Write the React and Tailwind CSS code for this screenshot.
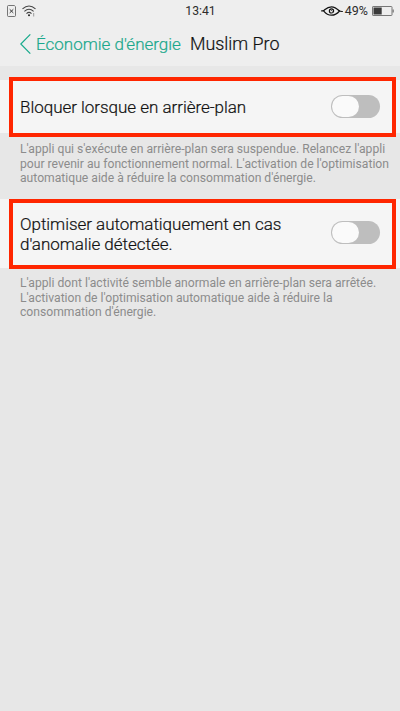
function CloseFileIcon() {
  return (
    <svg className="h-[12px] w-[9px]" viewBox="0 0 9 12" fill="none" stroke="#555">
      <path d="M1.5 .5h5.8l1.2 1.2v8.8q0 1-1 1h-6q-1 0-1-1v-9q0-1 1-1z" strokeWidth=".8" />
      <path d="M2.700 4.300l3.600 3.600M6.300 4.300L2.700 7.900" stroke="#333" />
    </svg>
  )
}

function WifiIcon() {
  return (
    <svg className="h-[12px] w-[14px]" viewBox="0 0 14 12" fill="none" stroke="#444" strokeWidth="1.1">
      <path d="M.5 3.900Q7-1.800 13.500 3.900" />
      <path d="M2.400 6.300Q7 2.300 11.600 6.300" />
      <path d="M4.500 8.600Q7 6.300 9.500 8.600" />
      <circle cx="7" cy="10.300" r="1" fill="#222" stroke="none" />
      <path d="M11.700 8v3.500" stroke="#999" strokeWidth="1" />
    </svg>
  )
}

function EyeIcon() {
  return (
    <svg className="h-[10px] w-[22px]" viewBox="0 0 22 10" fill="none" stroke="#111" strokeLinecap="round">
      <path d="M.6 4.800Q2.500 5.200 4 3.500Q7 .8 10.500 .8T18.500 5Q15 9.200 10.500 9.200T3 5.300" strokeWidth="1.200" />
      <path d="M17.500 4.400Q19.500 5.600 21.400 5.500" strokeWidth="1.100" />
      <circle cx="10.500" cy="4.900" r="2.100" strokeWidth="1.200" />
      <path d="M10.500 4.500l.7.600" strokeWidth=".8" />
    </svg>
  )
}

function BatteryIcon() {
  return (
    <svg className="h-[10px] w-[22px]" viewBox="0 0 22 10" fill="none">
      <rect x=".5" y=".5" width="19.500" height="9" rx=".6" stroke="#777" />
      <rect x="1.500" y="1.500" width="8.200" height="7" fill="#3a3a3a" />
      <rect x="20.500" y="3.500" width="1.300" height="3" fill="#777" />
    </svg>
  )
}

function StatusBar() {
  return (
    <div className="grid h-5 grid-cols-3 items-center pr-[6px] pl-[7px] text-[#2c2c2c]">
      <div className="flex items-center gap-[6px]">
        <CloseFileIcon />
        <WifiIcon />
      </div>
      <span className="pt-px text-center text-[12.2px] leading-5">13:41</span>
      <div className="flex items-center justify-end">
        <EyeIcon />
        <span className="mr-1 ml-[2px] text-[12.5px] leading-5">49%</span>
        <BatteryIcon />
      </div>
    </div>
  )
}

function Switch({ className }) {
  return (
    <span className={`flex h-[23px] w-[49px] shrink-0 rounded-full bg-[#bebebe] p-px ${className}`}>
      <span className="h-[21px] w-[27px] rounded-full bg-[#fafafa]" />
    </span>
  )
}

function Setting({ label, note, className, boxClass, switchClass, noteClass }) {
  return (
    <section>
      <div className={`bg-[#f5f5f5] pr-1 pl-[9px] ${className}`}>
        <div className={`flex items-center justify-between border-4 border-[#ff2600] pr-3 pl-[7px] ${boxClass}`}>
          <p className="text-[17px] leading-[20px] font-light tracking-[-0.03px] whitespace-pre-line text-[#111] [-webkit-text-stroke:0.2px]">{label}</p>
          <Switch className={switchClass} />
        </div>
      </div>
      <p className={`pl-5 text-[12.15px] leading-[14.5px] whitespace-pre text-[#8c8c8c] ${noteClass}`}>{note}</p>
    </section>
  )
}

export default function App() {
  return (
    <main className="h-[711px] w-[400px] overflow-hidden bg-[#e7e7e7] font-['Roboto',sans-serif]">
      <header className="h-[66px] bg-[#eeeeee]">
        <StatusBar />
        <div className="flex h-12 items-center pl-5">
          <svg className="h-5 w-[11px]" viewBox="0 0 11 20" fill="none" stroke="#16a98b" strokeWidth="1.200">
            <path d="M10.300.4L.8 10l9.500 9.600" />
          </svg>
          <span className="ml-[5px] pt-px text-[17px] font-light text-[#1aa88c] [-webkit-text-stroke:0.2px]">Économie d'énergie</span>
          <h1 className="ml-[9px] pt-px text-[17.9px] font-light text-[#111] [-webkit-text-stroke:0.2px]">Muslim Pro</h1>
        </div>
      </header>
      <div className="pt-[14px]">
        <Setting
          label="Bloquer lorsque en arrière-plan"
          note={"L'appli qui s'exécute en arrière-plan sera suspendue. Relancez l'appli\npour revenir au fonctionnement normal. L'activation de l'optimisation\nautomatique aide à réduire la consommation d'énergie."}
          className="h-[53px]"
          boxClass="relative -top-[3px] h-[60px]"
          switchClass="mb-[2px]"
          noteClass="mt-[9px]"
        />
        <div className="h-[13.500px]" />
        <Setting
          label={"Optimiser automatiquement en cas\nd'anomalie détectée."}
          note={"L'appli dont l'activité semble anormale en arrière-plan sera arrêtée.\nL'activation de l'optimisation automatique aide à réduire la\nconsommation d'énergie."}
          className="h-[69px]"
          boxClass="h-[70px]"
          switchClass="mb-[3px]"
          noteClass="mt-2"
        />
      </div>
    </main>
  )
}
